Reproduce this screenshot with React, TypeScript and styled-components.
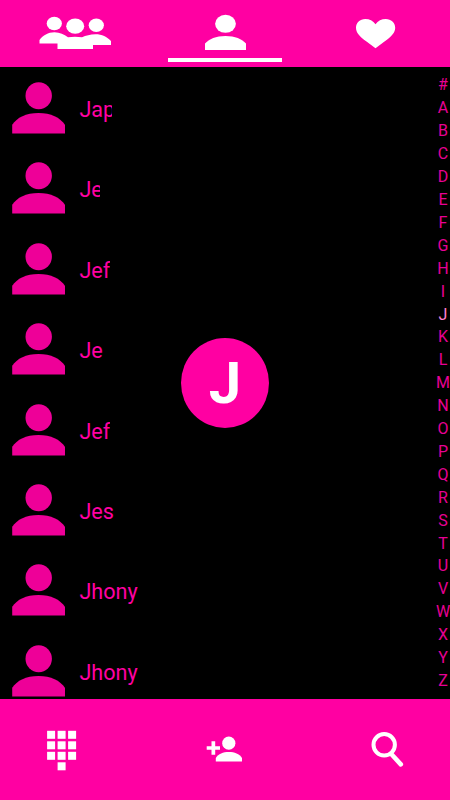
import React from 'react';
import styled, { createGlobalStyle } from 'styled-components';

const PINK = '#ff00a2';

const GlobalStyle = createGlobalStyle`
  * { box-sizing: border-box; }
  body { margin: 0; background: #000; font-family: Roboto, "Liberation Sans", sans-serif; }
  svg { display: block; }
  ul { list-style: none; margin: 0; padding: 0; }
`;

const Screen = styled.div`
  width: 450px;
  height: 800px;
  display: flex;
  flex-direction: column;
  background: #000;
  overflow: hidden;
`;

const TabBar = styled.header`
  flex: 0 0 67px;
  display: grid;
  grid-template-columns: repeat(3, 1fr);
  background: ${PINK};
`;

const Tab = styled.button<{ $active?: boolean }>`
  border: 0;
  margin: 0 18px 5px;
  padding: 0;
  background: none;
  border-bottom: 4px solid ${p => (p.$active ? '#fff' : 'transparent')};
`;

const Main = styled.main`
  position: relative;
  flex: 0 0 632px;
  display: flex;
  justify-content: space-between;
  overflow: hidden;
`;

const ContactList = styled.ul`
  flex: 1;
  padding-top: 1px;
`;

const Contact = styled.li`
  height: 80.4px;
  display: flex;
  align-items: flex-start;
  padding: 14px 0 0 12px;
`;

const Name = styled.span<{ $clip?: number }>`
  margin: 15px 0 0 14.4px;
  width: ${p => (p.$clip ? `${p.$clip}px` : 'auto')};
  overflow: hidden;
  white-space: nowrap;
  font-size: 21.6px;
  line-height: 26px;
  color: ${PINK};
`;

const LetterIndex = styled.ul`
  width: 14px;
  padding-top: 7px;
`;

const IndexLetter = styled.li<{ $current?: boolean }>`
  height: 22.92px;
  display: flex;
  align-items: center;
  justify-content: center;
  font-size: 16px;
  line-height: 22px;
  color: ${p => (p.$current ? '#ff80d0' : '#e80094')};
`;

const LetterBubble = styled.div`
  position: absolute;
  left: 181px;
  top: 271px;
  width: 88px;
  height: 90px;
  border-radius: 50%;
  display: flex;
  align-items: center;
  justify-content: center;
  background: ${PINK};
  color: #fff;
  font-size: 58px;
  font-weight: 700;
  line-height: 1;
`;

const BottomBar = styled.footer`
  flex: 0 0 101px;
  display: flex;
  justify-content: space-between;
  padding: 28px 44px 0 44px;
  background: ${PINK};
`;

const Action = styled.button`
  border: 0;
  padding: 0;
  height: 45px;
  background: none;
`;

const Avatar = () => (
  <svg width="53" height="53" viewBox="0 0 53 53" fill="#ee0098">
    <ellipse cx="26.7" cy="13.8" rx="13.2" ry="13.5" />
    <path d="M0.2 51.6V42.8C5 35.5 14 31 26.5 31S48 35.5 53 42.8V51.6Z" />
  </svg>
);

const GroupIcon = () => (
  <svg width="114" height="58" viewBox="18 0 114 58" fill="#fff">
    <ellipse cx="54.3" cy="23.5" rx="7.6" ry="6.7" />
    <ellipse cx="75.2" cy="26.2" rx="9" ry="7.6" />
    <ellipse cx="96.3" cy="25.2" rx="7.6" ry="6.7" />
    <path d="M39.5 43.5V40C43 35.5 48 32.3 54.5 32.3C60 32.3 64 34.5 68 37.3Q75 36 82 37.3C86 35.5 90 34.2 95.5 34.2C102 34.2 107 36.6 111 41V45H93V49H57.5V43.5Z" />
  </svg>
);

const PersonIcon = () => (
  <svg width="114" height="58" viewBox="168 0 114 58" fill="#fff">
    <ellipse cx="225.5" cy="23.8" rx="10.4" ry="9" />
    <path d="M205 50V43.5C209 39 216 36 225.5 36S242 39 246 43.5V50Z" />
  </svg>
);

const HeartIcon = () => (
  <svg width="114" height="58" viewBox="318 0 114 58" fill="#fff">
    <path d="M375.5 48.3L366.5 41.6C359.5 36.3 356 32.6 356 27.7C356 22.8 360 19 365.2 19C369.6 19 373 20.8 375.5 24.2C378 20.8 381.5 19 385.8 19C391 19 395.2 22.8 395.2 27.7C395.2 32.6 391.5 36.3 384.5 41.6Z" />
  </svg>
);

const keyDots = [[0, 0], [1, 0], [2, 0], [0, 1], [1, 1], [2, 1], [0, 2], [1, 2], [2, 2], [1, 3]];

const DialpadIcon = () => (
  <svg width="36" height="45" viewBox="44 727 36 45" fill="#fff">
    {keyDots.map(([c, r]) => (
      <rect key={`${c}-${r}`} x={47.1 + c * 10.5} y={730.8 + r * 10.5} width="8" height="8" />
    ))}
  </svg>
);

const AddPersonIcon = () => (
  <svg width="44" height="45" viewBox="202 727 44 45" fill="#fff">
    <path d="M211.5 741.2H215.2V746.2H220V749.8H215.2V754.8H211.5V749.8H206.7V746.2H211.5Z" />
    <circle cx="228.8" cy="743.2" r="6.6" />
    <path d="M215.8 761.5V758C218.5 753.8 223 752 228.8 752S239.3 753.8 242 758V761.5Z" />
  </svg>
);

const SearchIcon = () => (
  <svg width="38" height="45" viewBox="368 727 38 45" fill="none" stroke="#fff">
    <circle cx="384.2" cy="744.8" r="10.7" strokeWidth="4" />
    <path d="M391.5 754.2L400.8 764.4" strokeWidth="4.6" strokeLinecap="round" />
  </svg>
);

const contacts: { name: string; clip?: number }[] = [
  { name: 'Jap', clip: 32.6 },
  { name: 'Je', clip: 20.6 },
  { name: 'Jef' },
  { name: 'Je' },
  { name: 'Jef' },
  { name: 'Jes' },
  { name: 'Jhony' },
  { name: 'Jhony' },
];

const letters = '#ABCDEFGHIJKLMNOPQRSTUVWXYZ'.split('');

export default function App() {
  return (
    <Screen>
      <GlobalStyle />
      <TabBar>
        <Tab aria-label="Groups"><GroupIcon /></Tab>
        <Tab aria-label="Contacts" $active><PersonIcon /></Tab>
        <Tab aria-label="Favorites"><HeartIcon /></Tab>
      </TabBar>
      <Main>
        <ContactList>
          {contacts.map((c, i) => (
            <Contact key={i}>
              <Avatar />
              <Name $clip={c.clip}>{c.name}</Name>
            </Contact>
          ))}
        </ContactList>
        <LetterIndex>
          {letters.map(l => (
            <IndexLetter key={l} $current={l === 'J'}>{l}</IndexLetter>
          ))}
        </LetterIndex>
        <LetterBubble>J</LetterBubble>
      </Main>
      <BottomBar>
        <Action aria-label="Dialpad"><DialpadIcon /></Action>
        <Action aria-label="Add contact"><AddPersonIcon /></Action>
        <Action aria-label="Search"><SearchIcon /></Action>
      </BottomBar>
    </Screen>
  );
}
